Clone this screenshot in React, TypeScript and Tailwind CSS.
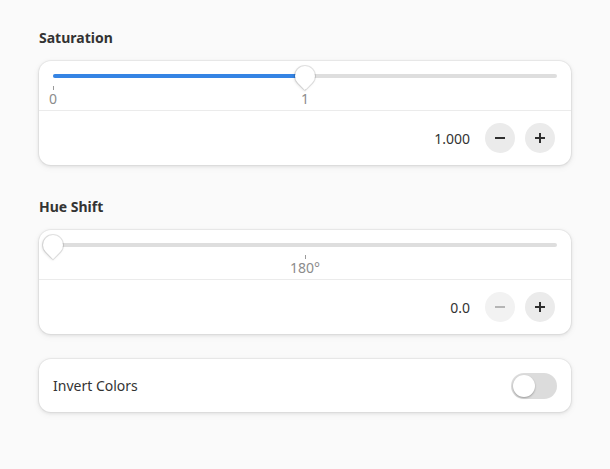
import React from "react";

const font = { fontFamily: '"Noto Sans", "Open Sans", sans-serif' };

function Thumb() {
  return (
    <div className="absolute top-1/2 -translate-x-1/2 -translate-y-1/2 w-[20px] h-[20px] rotate-45 bg-white rounded-full rounded-br-none shadow-[0_0_0_1px_rgba(0,0,0,0.1),0_1px_3px_rgba(0,0,0,0.15)]" style={{ left: "var(--pos)" }} />
  );
}

function Slider({ value, marks }: { value: number; marks: { at: number; label: string }[] }) {
  return (
    <div className="px-[14px] pt-[13px] h-[49px]">
      <div className="relative h-[4px] rounded-full bg-[#dedede]">
        <div className="absolute left-0 top-0 h-full rounded-full bg-[#3584e4]" style={{ width: `${value * 100}%` }} />
        {marks.map((m) => (
          <div key={m.label} className="absolute top-[12px] -translate-x-1/2 flex flex-col items-center" style={{ left: `${m.at * 100}%` }}>
            <div className="w-px h-[4px] bg-[#9a9a9a]" />
            <div className="text-[14px] leading-[18px] text-[#8c8c8c]">{m.label}</div>
          </div>
        ))}
        <div style={{ ["--pos" as any]: `${value * 100}%` }} className="absolute inset-0">
          <Thumb />
        </div>
      </div>
    </div>
  );
}

function RoundButton({ kind, disabled }: { kind: "minus" | "plus"; disabled?: boolean }) {
  const c = disabled ? "#b5b5b5" : "#2e2e2e";
  return (
    <div className={`w-[30px] h-[30px] rounded-full flex items-center justify-center ${disabled ? "bg-[#f2f2f2]" : "bg-[#ebebeb]"}`}>
      <svg width="16" height="16" viewBox="0 0 16 16">
        <rect x="3" y="7" width="10" height="2" fill={c} />
        {kind === "plus" && <rect x="7" y="3" width="2" height="10" fill={c} />}
      </svg>
    </div>
  );
}

function SpinRow({ value, minusDisabled }: { value: string; minusDisabled?: boolean }) {
  return (
    <div className="h-[55px] flex items-center justify-end pr-[16px] border-t border-[#ebebeb]">
      <span className="text-[14px] text-[#333] mr-[15px]">{value}</span>
      <div className="flex gap-[10px]">
        <RoundButton kind="minus" disabled={minusDisabled} />
        <RoundButton kind="plus" />
      </div>
    </div>
  );
}

const card = "bg-white rounded-[12px] shadow-[0_0_0_1px_rgba(0,0,0,0.04),0_1px_3px_1px_rgba(0,0,0,0.07),0_2px_6px_2px_rgba(0,0,0,0.03)]";

export default function App() {
  return (
    <div style={font} className="w-[610px] h-[469px] bg-[#fafafa] px-[39px] pt-[28px] text-[#2e2e2e]">
      <div className="text-[14px] leading-[20px] font-bold text-[#333] mb-[13px]">Saturation</div>
      <div className={card}>
        <Slider value={0.5} marks={[{ at: 0, label: "0" }, { at: 0.5, label: "1" }]} />
        <SpinRow value="1.000" />
      </div>
      <div className="text-[14px] leading-[20px] font-bold text-[#333] mt-[32px] mb-[13px]">Hue Shift</div>
      <div className={card}>
        <Slider value={0} marks={[{ at: 0.5, label: "180°" }]} />
        <SpinRow value="0.0" minusDisabled />
      </div>
      <div className={`${card} mt-[25px] h-[53px] flex items-center justify-between px-[14px]`}>
        <span className="text-[14px] text-[#333]">Invert Colors</span>
        <div className="w-[46px] h-[26px] rounded-full bg-[#dcdcdc] p-[2px] flex items-center">
          <div className="w-[22px] h-[22px] rounded-full bg-white shadow-[0_1px_2px_rgba(0,0,0,0.3)]" />
        </div>
      </div>
    </div>
  );
}
